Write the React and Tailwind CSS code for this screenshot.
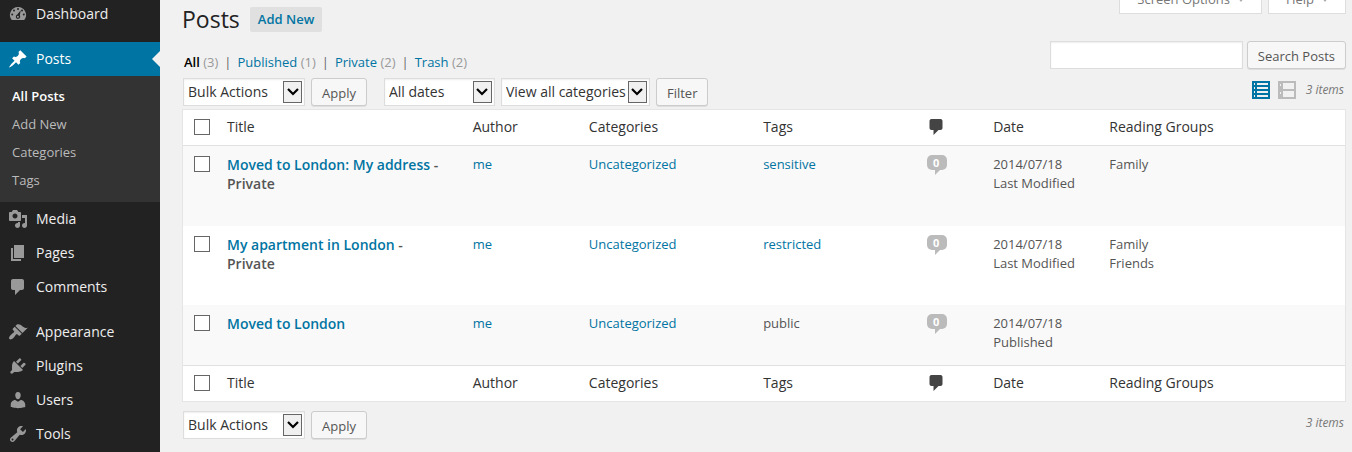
import React from "react";

const PATHS = {
  post: "M10.44 3.02l1.82-1.82 6.36 6.35-1.83 1.82c-1.05-.68-2.48-.57-3.41.36l-.75.75c-.92.93-1.04 2.35-.35 3.41l-1.83 1.82-2.41-2.41-2.8 2.79c-.42.42-3.38 2.71-3.8 2.29s1.86-3.39 2.28-3.81l2.79-2.79L4.1 9.36l1.83-1.82c1.05.69 2.48.57 3.4-.36l.75-.75c.93-.92 1.05-2.35.36-3.41z",
  media: "M13 11V4c0-.55-.45-1-1-1h-1.67L9 1H5L3.67 3H2c-.55 0-1 .45-1 1v7c0 .55.45 1 1 1h10c.55 0 1-.45 1-1zM7 4.5c1.38 0 2.5 1.12 2.5 2.5S8.38 9.5 7 9.5 4.5 8.38 4.5 7 5.62 4.5 7 4.5zM14 6h5v10.5c0 1.38-1.12 2.5-2.5 2.5S14 17.88 14 16.5s1.12-2.5 2.5-2.5c.17 0 .34.02.5.05V9h-3V6zm-4 8.05V13h2v3.5c0 1.38-1.12 2.5-2.5 2.5S7 17.88 7 16.5 8.12 14 9.5 14c.17 0 .34.02.5.05z",
  page: "M6 15V2h10v13H6zm-1 1h8v2H3V5h2v11z",
  comment: "M5 2h9c1.1 0 2 .9 2 2v7c0 1.1-.9 2-2 2h-2l-5 5v-5H5c-1.1 0-2-.9-2-2V4c0-1.1.9-2 2-2z",
  appearance: "M14.48 11.06L7.41 3.99l1.5-1.5c.5-.56 2.3-.47 3.51.32 1.21.8 1.43 1.28 2.91 2.1 1.18.64 2.45 1.26 4.45.85zm-.71.71L6.7 4.7 4.93 6.47c-.39.39-.39 1.02 0 1.41l1.06 1.06c.39.39.39 1.03 0 1.42-.6.6-1.43 1.11-2.21 1.69-.35.26-.7.53-1.01.84C1.43 14.23.4 16.08 1.4 17.07c.99 1 2.84-.03 4.18-1.36.31-.31.58-.66.85-1.02.57-.78 1.08-1.61 1.69-2.21.39-.39 1.02-.39 1.41 0l1.06 1.06c.39.39 1.02.39 1.41 0z",
  plugins: "M13.11 4.36L9.87 7.6 8 5.73l3.24-3.24c.35-.34 1.05-.2 1.56.32.52.51.66 1.21.31 1.55zm-8 1.77l.91-1.12 9.01 9.01-1.19.84c-.71.71-2.63 1.16-3.82 1.16H6.14L4.9 17.26c-.59.59-1.54.59-2.12 0-.59-.58-.59-1.53 0-2.12l1.24-1.24v-3.88c0-1.13.4-3.19 1.09-3.89zm7.26 3.97l3.24-3.24c.34-.35 1.04-.21 1.55.31.52.51.66 1.21.31 1.55l-3.24 3.25z",
  users: "M10 9.25c-2.27 0-2.73-3.44-2.73-3.44C7 4.02 7.82 2 9.97 2c2.16 0 2.98 2.02 2.71 3.81 0 0-.41 3.44-2.68 3.44zm0 2.57L12.72 10c2.39 0 4.52 2.33 4.52 4.53v2.49s-3.65 1.13-7.24 1.13c-3.65 0-7.24-1.13-7.24-1.13v-2.49c0-2.25 1.94-4.48 4.47-4.48z",
  tools: "M16.68 9.77c-1.34 1.34-3.3 1.67-4.95.99l-5.41 6.52c-.99.99-2.59.99-3.58 0s-.99-2.59 0-3.57l6.52-5.42c-.68-1.65-.35-3.61.99-4.95 1.28-1.28 3.12-1.62 4.72-1.06l-2.89 2.89 2.82 2.82 2.86-2.87c.53 1.58.18 3.39-1.08 4.65zM3.81 16.21c.4.39 1.04.39 1.43 0 .4-.4.4-1.04 0-1.43-.39-.4-1.03-.4-1.43 0-.39.39-.39 1.03 0 1.43z",
};

function Icon({ name }) {
  return (
    <svg viewBox="0 0 20 20" className="h-5 w-5 shrink-0 fill-current" aria-hidden="true">
      <path fillRule="evenodd" d={PATHS[name]} />
    </svg>
  );
}

function GaugeIcon() {
  return (
    <svg viewBox="0 0 20 20" className="h-5 w-5 shrink-0 fill-current" aria-hidden="true">
      <path d="M3.76 16h12.48A7.998 7.998 0 0 0 10 3a7.998 7.998 0 0 0-6.24 13z" />
      <g fill="#222">
        <circle cx="10" cy="5" r="1" />
        <circle cx="6" cy="6.5" r="1" />
        <circle cx="14" cy="6.5" r="1" />
        <circle cx="4.2" cy="10.5" r="1" />
        <circle cx="15.8" cy="10.5" r="1" />
        <path d="M12.7 6.2l-.9 5.2c.2.4.4.8.4 1.3a2.2 2.2 0 1 1-2.9-2.1z" />
      </g>
      <circle cx="9.9" cy="12.8" r="1" />
    </svg>
  );
}

function MenuLink({ icon, children }) {
  return (
    <a href="#" className="flex h-[34px] items-center gap-2 pl-2 text-[#eee]">
      <span className="text-[#999]"><Icon name={icon} /></span>
      {children}
    </a>
  );
}

function Sidebar() {
  return (
    <nav aria-label="Main menu" className="w-40 shrink-0 bg-[#222] text-sm">
      <a href="#" className="flex h-[31px] items-center gap-2 pb-[3px] pl-2 text-[#eee]">
        <span className="text-[#999]"><GaugeIcon /></span>
        Dashboard
      </a>
      <a href="#" className="relative mt-[11px] flex h-[34px] items-center gap-2 bg-[#0074a2] pl-2 text-white">
        <Icon name="post" />
        Posts
        <span className="absolute top-[9px] right-0 border-y-8 border-r-8 border-y-transparent border-r-[#f1f1f1]" />
      </a>
      <div className="bg-[#333] pt-1.5 pb-2 text-[13px] leading-7 text-[#bbb]">
        <a href="#" className="block pl-3 font-semibold text-white">All Posts</a>
        <a href="#" className="block pl-3">Add New</a>
        <a href="#" className="block pl-3">Categories</a>
        <a href="#" className="block pl-3">Tags</a>
      </div>
      <MenuLink icon="media">Media</MenuLink>
      <MenuLink icon="page">Pages</MenuLink>
      <MenuLink icon="comment">Comments</MenuLink>
      <div className="mt-[11px]">
        <MenuLink icon="appearance">Appearance</MenuLink>
        <MenuLink icon="plugins">Plugins</MenuLink>
        <MenuLink icon="users">Users</MenuLink>
        <MenuLink icon="tools">Tools</MenuLink>
      </div>
    </nav>
  );
}

function Select({ label, option, className }) {
  return (
    <div className={"relative " + className}>
      <select
        aria-label={label}
        className="block h-7 w-full appearance-none border border-[#ddd] bg-white pr-5 pl-1 text-sm leading-5 text-[#333] shadow-[inset_0_1px_2px_rgba(0,0,0,0.07)]"
      >
        <option>{option}</option>
      </select>
      <span className="pointer-events-none absolute top-[3px] right-[3px] flex h-[22px] w-[19px] items-center justify-center border border-[#666] bg-[#f0f0f0]">
        <svg viewBox="0 0 12 8" className="h-2 w-3" aria-hidden="true">
          <path d="M1 1l5 5 5-5" fill="none" stroke="#000" strokeWidth="2.2" />
        </svg>
      </span>
    </div>
  );
}

function Button({ children }) {
  return (
    <button
      type="button"
      className="h-7 shrink-0 rounded-[3px] border border-[#ccc] bg-[#f7f7f7] px-2.5 pt-0.5 text-[13px] leading-5 text-[#555] shadow-[0_1px_0_rgba(0,0,0,0.08)]"
    >
      {children}
    </button>
  );
}

function Checkbox({ label }) {
  return (
    <input
      type="checkbox"
      aria-label={label}
      className="block h-4 w-4 appearance-none border border-[#666] bg-white checked:bg-[#0074a2]"
    />
  );
}

function CommentBubble() {
  return (
    <a href="#" aria-label="0 comments" className="relative block h-[15px] w-5 rounded-[5px] bg-[#bbb] pr-0.5 text-center text-[11px] leading-4 font-bold text-white">
      0
      <svg viewBox="0 0 5 5" className="absolute top-full left-2 h-[5px] w-[5px]" aria-hidden="true">
        <path d="M0 0h5L0 5z" fill="#bbb" />
      </svg>
    </a>
  );
}

function HeadingCells() {
  return (
    <>
      <th className="pl-[11px]"><Checkbox label="Select all" /></th>
      <th className="px-2.5 font-normal">Title</th>
      <th className="px-2.5 font-normal">Author</th>
      <th className="px-2.5 font-normal">Categories</th>
      <th className="px-2.5 font-normal">Tags</th>
      <th className="px-2" aria-label="Comments">
        <svg viewBox="3 2 13 16" className="ml-0.5 h-4 w-3.5 fill-[#444]" aria-hidden="true">
          <path d={PATHS.comment} />
        </svg>
      </th>
      <th className="px-2.5 font-normal">Date</th>
      <th className="px-2.5 font-normal">Reading Groups</th>
    </>
  );
}

const POSTS = [
  { title: "Moved to London: My address", priv: true, tag: "sensitive", status: "Last Modified", groups: ["Family"], row: "h-[81px] bg-[#f9f9f9]" },
  { title: "My apartment in London", priv: true, tag: "restricted", status: "Last Modified", groups: ["Family", "Friends"], row: "h-[79px] bg-white" },
  { title: "Moved to London", priv: false, tag: "public", status: "Published", groups: [], row: "h-[60px] bg-[#f9f9f9]" },
];

function PostRow({ post }) {
  return (
    <tr className={"align-top " + post.row}>
      <td className="pt-2.5 pl-[11px]"><Checkbox label={"Select " + post.title} /></td>
      <td className="px-2.5 pt-[9px] text-sm leading-[19px] font-semibold">
        <a href="#" className="text-[#0074a2]">{post.title}</a>
        {post.priv && <> -<br />Private</>}
      </td>
      <td className="px-2.5 pt-[9px]"><a href="#" className="text-[#0074a2]">me</a></td>
      <td className="px-2.5 pt-[9px]"><a href="#" className="text-[#0074a2]">Uncategorized</a></td>
      <td className="px-2.5 pt-[9px]">
        {post.tag === "public" ? post.tag : <a href="#" className="text-[#0074a2]">{post.tag}</a>}
      </td>
      <td className="px-2 pt-[9px]"><CommentBubble /></td>
      <td className="px-2.5 pt-[9px]">2014/07/18<br />{post.status}</td>
      <td className="px-2.5 pt-[9px]">
        {post.groups.map((g) => <div key={g}>{g}</div>)}
      </td>
    </tr>
  );
}

function PostsTable() {
  return (
    <div className="mt-[3px] border border-[#e5e5e5] bg-white">
      <table className="w-full table-fixed border-collapse text-left text-[13px] leading-[19px] text-[#555]">
        <colgroup>
          <col className="w-[34px]" />
          <col />
          <col className="w-[10%]" />
          <col className="w-[15%]" />
          <col className="w-[166px]" />
          <col className="w-16" />
          <col className="w-[10%]" />
          <col />
        </colgroup>
        <thead>
          <tr className="h-[35px] border-b border-[#e1e1e1] text-sm text-[#333]"><HeadingCells /></tr>
        </thead>
        <tbody>
          {POSTS.map((p) => <PostRow key={p.title} post={p} />)}
        </tbody>
        <tfoot>
          <tr className="h-9 border-t border-[#e1e1e1] text-sm text-[#333]"><HeadingCells /></tr>
        </tfoot>
      </table>
    </div>
  );
}

function Filter({ label, count, current, last }) {
  return (
    <li className="flex">
      <a href="#" className={current ? "font-semibold text-black" : "text-[#0074a2]"}>
        {label} <span className="font-normal text-[#999]">({count})</span>
      </a>
      {!last && <span className="px-1.5 text-[#666]">|</span>}
    </li>
  );
}

function ScreenTab({ children }) {
  return (
    <button type="button" className="flex h-7 items-center gap-2 border border-[#ddd] bg-white px-[17px] text-[13px] text-[#777]">
      {children}
      <svg viewBox="0 0 6 4" className="h-1 w-1.5" aria-hidden="true"><path d="M0 0h6L3 4z" fill="#aaa" /></svg>
    </button>
  );
}

export default function App() {
  return (
    <div className="flex min-h-screen bg-[#f1f1f1] font-['Open_Sans',sans-serif] text-[#444]">
      <Sidebar />
      <main className="min-w-0 flex-1 pr-1.5 pl-[22px]">
        <header className="flex h-[41px] items-start justify-between">
          <div className="flex items-center gap-2.5 pt-1">
            <h1 className="text-[23px] leading-[30px] text-[#222]">Posts</h1>
            <a href="#" className="rounded-[2px] bg-[#e0e0e0] px-2 text-[13px] leading-[25px] font-semibold text-[#0074a2]">Add New</a>
          </div>
          <div className="flex h-3.5 items-end gap-1.5 overflow-hidden">
            <ScreenTab>Screen Options</ScreenTab>
            <ScreenTab>Help</ScreenTab>
          </div>
        </header>

        <div className="flex h-[31px] items-start justify-between">
          <ul className="flex self-end pl-0.5 text-[13px] leading-5">
            <Filter label="All" count={3} current />
            <Filter label="Published" count={1} />
            <Filter label="Private" count={2} />
            <Filter label="Trash" count={2} last />
          </ul>
          <form className="flex gap-1" onSubmit={(e) => e.preventDefault()}>
            <input type="search" aria-label="Search Posts" className="h-7 w-[193px] border border-[#ddd] bg-white px-1 text-sm shadow-[inset_0_1px_2px_rgba(0,0,0,0.07)]" />
            <Button>Search Posts</Button>
          </form>
        </div>

        <div className="mt-1.5 flex items-center justify-between">
          <div className="flex gap-1.5 pl-px">
            <Select label="Bulk actions" option="Bulk Actions" className="w-[122px]" />
            <Button>Apply</Button>
            <Select label="Filter by date" option="All dates" className="ml-[11px] w-[111px]" />
            <Select label="Filter by category" option="View all categories" className="w-[149px]" />
            <Button>Filter</Button>
          </div>
          <div className="flex items-center pr-0.5 pb-1">
            <button type="button" aria-label="List view" className="mr-2">
              <svg viewBox="0 0 18 18" className="block h-[18px] w-[18px]" aria-hidden="true">
                <path fill="#0074a2" d="M0 0h18v18H0z" />
                <path fill="#f1f1f1" d="M2 2h1v2H2zM5 2h11v2H5zM2 6h1v2H2zM5 6h11v2H5zM2 10h1v2H2zM5 10h11v2H5zM2 14h1v2H2zM5 14h11v2H5z" />
              </svg>
            </button>
            <button type="button" aria-label="Excerpt view" className="mr-2.5">
              <svg viewBox="0 0 18 18" className="block h-[18px] w-[18px]" aria-hidden="true">
                <path fill="#bbb" d="M0 0h18v18H0z" />
                <path fill="#f1f1f1" d="M2 3h1v2H2zM5 2h11v6H5zM2 11h1v2H2zM5 10h11v6H5z" />
              </svg>
            </button>
            <span className="text-xs text-[#777] italic">3 items</span>
          </div>
        </div>

        <PostsTable />

        <div className="mt-[9px] flex items-center justify-between">
          <div className="flex gap-1.5 pl-px">
            <Select label="Bulk actions" option="Bulk Actions" className="w-[122px]" />
            <Button>Apply</Button>
          </div>
          <span className="pr-0.5 pb-1 text-xs text-[#777] italic">3 items</span>
        </div>
      </main>
    </div>
  );
}
